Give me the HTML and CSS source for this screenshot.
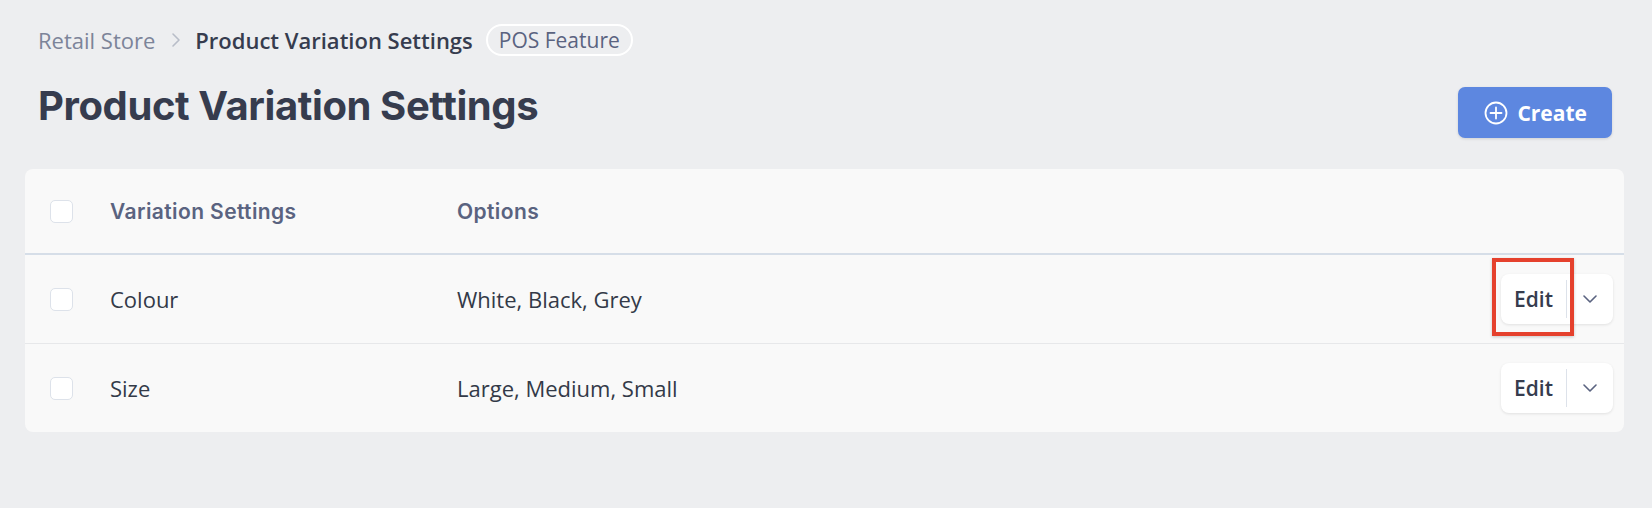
FILE: index.html
```html
<!DOCTYPE html>
<html lang="en">
<head>
    <meta charset="UTF-8">
    <meta name="viewport" content="width=device-width, initial-scale=1.0">
    <title>Product Variation Settings</title>
    <link rel="stylesheet" href="styles.css">
</head>

<body>
    <div class="page">
        <nav class="breadcrumb">
            <span class="crumb">Retail Store</span>
            <svg class="crumb-sep" width="10" height="16" viewBox="0 0 10 16">
                <path d="M2 2l6 6-6 6" fill="none" stroke="#b8bdc8" stroke-width="1.6" stroke-linecap="round" stroke-linejoin="round"/>
            </svg>
            <span class="crumb current">Product Variation Settings</span>
            <span class="pill">POS Feature</span>
        </nav>

        <div class="title-row">
            <h1>Product Variation Settings</h1>
            <button class="btn-create" type="button">
                <svg width="24" height="24" viewBox="0 0 24 24">
                    <circle cx="12" cy="12" r="10.5" fill="none" stroke="#fff" stroke-width="1.8"/>
                    <path d="M12 6.5v11M6.5 12h11" stroke="#fff" stroke-width="1.8" stroke-linecap="round"/>
                </svg>
                Create
            </button>
        </div>

        <div class="card">
            <div class="row head">
                <span class="check"></span>
                <span>Variation Settings</span>
                <span>Options</span>
                <span></span>
            </div>
            <div class="row">
                <span class="check"></span>
                <span>Colour</span>
                <span>White, Black, Grey</span>
                <div class="actions">
                    <button class="btn-edit" type="button">Edit</button>
                    <button class="btn-more" type="button">
                        <svg width="14" height="8" viewBox="0 0 14 8"><path d="M1 1l6 6 6-6" fill="none" stroke="#5a6380" stroke-width="1.6" stroke-linecap="round" stroke-linejoin="round"/></svg>
                    </button>
                    <span class="highlight"></span>
                </div>
            </div>
            <div class="row">
                <span class="check"></span>
                <span>Size</span>
                <span>Large, Medium, Small</span>
                <div class="actions">
                    <button class="btn-edit" type="button">Edit</button>
                    <button class="btn-more" type="button">
                        <svg width="14" height="8" viewBox="0 0 14 8"><path d="M1 1l6 6 6-6" fill="none" stroke="#5a6380" stroke-width="1.6" stroke-linecap="round" stroke-linejoin="round"/></svg>
                    </button>
                </div>
            </div>
        </div>
    </div>
</body>
</html>
```

FILE: styles.css
```css
body {
    margin: 0;
    background-color: #edeef0;
    font-family: "Open Sans", Arial, sans-serif;
    color: #333a48;
}

.page {
    padding: 24px 28px 0 25px;
}

/* breadcrumb */
.breadcrumb {
    display: flex;
    align-items: center;
    height: 32px;
    padding-left: 13px;
    font-size: 22px;
}

.crumb {
    color: #7c8499;
}

.crumb.current {
    color: #363c4e;
    font-weight: 600;
}

.crumb-sep {
    margin: 0 14px 0 16px;
}

.pill {
    margin-left: 13px;
    height: 28px;
    line-height: 28px;
    padding: 0 11px;
    border: 2px solid #fff;
    border-radius: 16px;
    font-size: 21px;
    color: #5a6380;
}

/* title */
.title-row {
    display: flex;
    justify-content: space-between;
    align-items: flex-start;
    margin-top: 26px;
    padding: 0 12px 0 13px;
}

h1 {
    margin: 0;
    font-family: Inter, "Open Sans", sans-serif;
    font-size: 40px;
    line-height: 48px;
    font-weight: 700;
    color: #363c4e;
    letter-spacing: -0.4px;
}

.btn-create {
    display: flex;
    align-items: center;
    gap: 9px;
    margin-top: 5px;
    height: 51px;
    padding: 0 25px 0 26px;
    border: none;
    border-radius: 7px;
    background-color: #5d87e0;
    color: #fff;
    font-family: "Open Sans", Arial, sans-serif;
    font-size: 21px;
    font-weight: 700;
    box-shadow: 0 1px 3px rgba(0, 0, 0, 0.12);
}

/* table */
.card {
    margin-top: 31px;
    background-color: #f9f9f9;
    border-radius: 8px;
}

.row {
    display: grid;
    grid-template-columns: 60px 347px 1fr auto;
    align-items: center;
    height: 88px;
    padding: 0 11px 0 25px;
    border-bottom: 1px solid #e7e8ea;
    font-size: 22px;
}

.row:last-child {
    border-bottom: none;
}

.row.head {
    height: 84px;
    border-bottom: 2px solid #d6dee8;
    font-family: Inter, "Open Sans", sans-serif;
    font-size: 21px;
    font-weight: 600;
    letter-spacing: 0.4px;
    color: #5a6380;
}

.check {
    width: 21px;
    height: 21px;
    background-color: #fff;
    border: 1px solid #dde2ea;
    border-radius: 5px;
}

.actions {
    position: relative;
    display: flex;
    align-items: center;
    height: 50px;
    background-color: #fff;
    border-radius: 8px;
    box-shadow: 0 1px 3px rgba(0, 0, 0, 0.1);
}

.actions button {
    height: 100%;
    border: none;
    background: none;
    font-family: "Open Sans", Arial, sans-serif;
}

.btn-edit {
    width: 66px;
    font-size: 21px;
    font-weight: 600;
    color: #363c4e;
}

.actions .btn-edit {
    height: 38px;
    border-right: 1px solid #dde2ea;
}

.btn-more {
    display: flex;
    align-items: center;
    justify-content: center;
    width: 46px;
}

.highlight {
    position: absolute;
    left: -9px;
    top: -16px;
    width: 74px;
    height: 70px;
    border: 4px solid #e5412d;
    box-shadow: 0 1px 3px rgba(0, 0, 0, 0.2);
    pointer-events: none;
}
```
